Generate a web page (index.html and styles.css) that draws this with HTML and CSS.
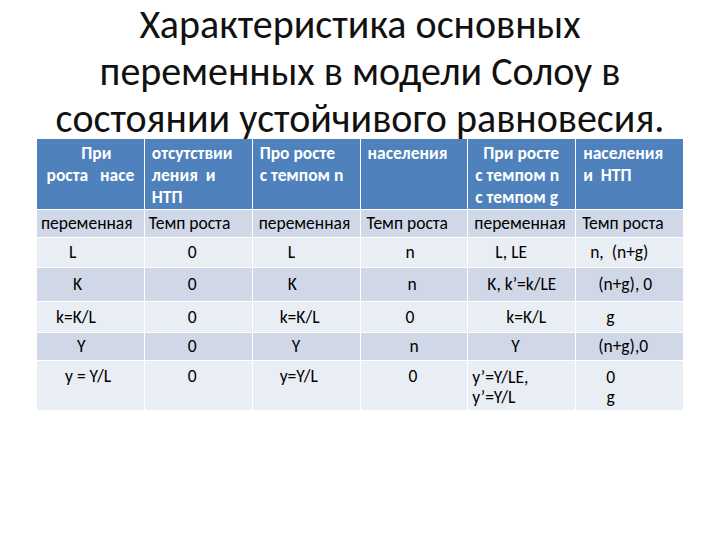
FILE: index.html
```html
<!DOCTYPE html>
<html lang="ru">
<head>
<meta charset="utf-8">
<title>Солоу</title>
<link rel="stylesheet" href="styles.css">
</head>
<body>
<main class="slide">
  <h1 class="title">Характеристика основных<br>переменных в модели Солоу в<br>состоянии устойчивого равновесия.</h1>
  <div class="table">
    <div class="cell head center"><span class="ind-c">При</span><br>роста&nbsp;&nbsp; насе</div>
    <div class="cell head">отсутствии<br>ления&nbsp; и<br>НТП</div>
    <div class="cell head">Про росте<br>с темпом n</div>
    <div class="cell head">населения</div>
    <div class="cell head"><span class="ind">При росте</span><br>с темпом n<br>с темпом g</div>
    <div class="cell head">населения<br>и&nbsp; НТП</div>

    <div class="cell dark p4"><span>переменная</span></div>
    <div class="cell dark p4"><span>Темп роста</span></div>
    <div class="cell dark p6"><span>переменная</span></div>
    <div class="cell dark p6"><span>Темп роста</span></div>
    <div class="cell dark p6"><span>переменная</span></div>
    <div class="cell dark p6"><span>Темп роста</span></div>

    <div class="cell light p32"><span>L</span></div>
    <div class="cell light p43"><span>0</span></div>
    <div class="cell light p35"><span>L</span></div>
    <div class="cell light p45"><span>n</span></div>
    <div class="cell light p27"><span>L, LE</span></div>
    <div class="cell light p14"><span>n,&nbsp; (n+g)</span></div>

    <div class="cell dark p36"><span>K</span></div>
    <div class="cell dark p43"><span>0</span></div>
    <div class="cell dark p35"><span>K</span></div>
    <div class="cell dark p47"><span>n</span></div>
    <div class="cell dark p19"><span>K, k’=k/LE</span></div>
    <div class="cell dark p22"><span>(n+g), 0</span></div>

    <div class="cell light p19"><span>k=K/L</span></div>
    <div class="cell light p43"><span>0</span></div>
    <div class="cell light p27"><span>k=K/L</span></div>
    <div class="cell light p45"><span>0</span></div>
    <div class="cell light p38"><span>k=K/L</span></div>
    <div class="cell light p30"><span>g</span></div>

    <div class="cell dark p40"><span>Y</span></div>
    <div class="cell dark p43"><span>0</span></div>
    <div class="cell dark p39"><span>Y</span></div>
    <div class="cell dark p49"><span>n</span></div>
    <div class="cell dark p43"><span>Y</span></div>
    <div class="cell dark p22"><span>(n+g),0</span></div>

    <div class="cell light top p28"><span>y = Y/L</span></div>
    <div class="cell light top p43"><span>0</span></div>
    <div class="cell light top p27"><span>y=Y/L</span></div>
    <div class="cell light top p48"><span>0</span></div>
    <div class="cell light top p4"><span class="lines">y’=Y/LE,<br>y’=Y/L</span></div>
    <div class="cell light top p30"><span class="lines stack">0<br>g</span></div>
  </div>
</main>
</body>
</html>
```

FILE: styles.css
```css
html, body {
  margin: 0;
  padding: 0;
  background: #ffffff;
}

.slide {
  width: 720px;
  height: 540px;
  font-family: Carlito, Lato, "Open Sans", sans-serif;
  color: #000000;
  overflow: hidden;
}

.title {
  margin: 0;
  height: 139px;
  box-sizing: border-box;
  padding-top: 1px;
  font-size: 40px;
  line-height: 47px;
  font-weight: 400;
  text-align: center;
  color: #111111;
  white-space: nowrap;
}

.table {
  margin-left: 37px;
  width: 646px;
  display: grid;
  grid-template-columns: repeat(6, minmax(0, 1fr));
  grid-template-rows: 70px 27px 29px 33px 30px 27px 49px;
  gap: 1px;
  background: #ffffff;
}

.cell {
  display: flex;
  align-items: center;
  white-space: nowrap;
  font-size: 17.5px;
  line-height: 19px;
  box-sizing: border-box;
  overflow: hidden;
}

.head {
  display: block;
  background: #4f81bd;
  color: #ffffff;
  font-weight: 700;
  font-size: 17.5px;
  line-height: 22px;
  padding: 3px 0 0 7px;
}

.head.center {
  text-align: center;
  padding-left: 0;
}

.ind-c {
  padding-left: 12px;
}

.ind {
  padding-left: 8px;
}

.dark { background: #d0d8e8; }
.light { background: #e9edf4; }

.top {
  align-items: flex-start;
  padding-top: 6px;
}

.lines {
  display: block;
  line-height: 20px;
}

.stack {
  text-align: center;
}

.p4 { padding-left: 4px; }
.p6 { padding-left: 6px; }
.p14 { padding-left: 14px; }
.p19 { padding-left: 19px; }
.p22 { padding-left: 22px; }
.p27 { padding-left: 27px; }
.p28 { padding-left: 28px; }
.p30 { padding-left: 30px; }
.p32 { padding-left: 32px; }
.p35 { padding-left: 35px; }
.p36 { padding-left: 36px; }
.p38 { padding-left: 38px; }
.p39 { padding-left: 39px; }
.p40 { padding-left: 40px; }
.p43 { padding-left: 43px; }
.p45 { padding-left: 45px; }
.p47 { padding-left: 47px; }
.p48 { padding-left: 48px; }
.p49 { padding-left: 49px; }
```
